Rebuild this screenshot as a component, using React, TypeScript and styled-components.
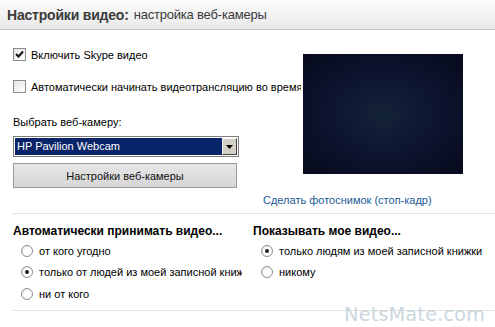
import React from 'react';
import styled, { createGlobalStyle } from 'styled-components';

const GlobalStyle = createGlobalStyle`
  html, body {
    margin: 0;
    padding: 0;
    background: #ffffff;
  }
  body {
    font-family: "Liberation Sans", Arial, sans-serif;
    font-size: 11px;
    color: #000000;
  }
`;

const Window = styled.div`
  position: relative;
  width: 495px;
  height: 327px;
  overflow: hidden;
  background: #ffffff;
`;

const Header = styled.div`
  height: 29px;
  display: flex;
  align-items: center;
  padding-left: 7px;
  background: linear-gradient(#fbfbfb, #e9e9e9);
  border-bottom: 1px solid #c9c9c9;
  font-size: 13px;
  letter-spacing: -0.2px;
  color: #3a3a3a;
  white-space: nowrap;
`;

const HeaderStrong = styled.span`
  font-size: 14px;
  font-weight: bold;
  margin-right: 5px;
`;

const Top = styled.div`
  display: flex;
  height: 183px;
  border-bottom: 1px solid #e2e2e2;
  margin-left: 12px;
  padding-left: 1px;
`;

const LeftCol = styled.div`
  width: 250px;
  display: flex;
  flex-direction: column;
  padding-top: 18px;
`;

const CheckRow = styled.label`
  width: 288px;
  height: 13px;
  display: flex;
  align-items: center;
  gap: 5px;
  overflow: hidden;
  white-space: nowrap;
  margin-bottom: 19px;
`;

const Box = styled.span`
  flex: 0 0 auto;
  width: 11px;
  height: 11px;
  border: 1px solid #8c8c8c;
  background: linear-gradient(135deg, #e4e4e4, #ffffff);
  display: flex;
  align-items: center;
  justify-content: center;
`;

const FieldLabel = styled.div`
  margin-top: 3px;
  height: 14px;
  line-height: 14px;
`;

const Select = styled.div`
  margin-top: 7px;
  width: 222px;
  height: 17px;
  border: 1px solid #7c7c7c;
  padding: 1px;
  display: flex;
  background: #ffffff;
`;

const SelectValue = styled.div`
  flex: 1;
  background: #0a246a;
  color: #ffffff;
  line-height: 17px;
  padding-left: 2px;
`;

const SelectArrow = styled.div`
  width: 15px;
  background: #d4d0c8;
  border-top: 1px solid #f4f4f4;
  border-left: 1px solid #f4f4f4;
  border-right: 1px solid #404040;
  border-bottom: 1px solid #404040;
  box-sizing: border-box;
  display: flex;
  align-items: center;
  justify-content: center;
`;

const Button = styled.div`
  margin-top: 6px;
  width: 222px;
  height: 23px;
  border: 1px solid #9a9a9a;
  background: linear-gradient(#e6e6e6, #d6d6d6);
  display: flex;
  align-items: center;
  justify-content: center;
  color: #111;
`;

const RightCol = styled.div`
  display: flex;
  flex-direction: column;
  padding-top: 24px;
`;

const Preview = styled.div`
  margin-left: 40px;
  width: 160px;
  height: 120px;
  background: radial-gradient(ellipse at 50% 50%, #142338 0%, #0d1530 45%, #070a1c 100%);
`;

const Link = styled.a`
  margin-top: 19px;
  color: #1b5a96;
  text-decoration: none;
  line-height: 14px;
`;

const Bottom = styled.div`
  display: grid;
  grid-template-columns: 229px 1fr;
  column-gap: 11px;
  margin-left: 12px;
  padding: 10px 0 0 1px;
  height: 86px;
  border-bottom: 1px solid #e2e2e2;
`;

const Group = styled.div`
  display: flex;
  flex-direction: column;
  overflow: hidden;
  white-space: nowrap;
`;

const GroupTitle = styled.div`
  font-weight: bold;
  font-size: 12px;
  height: 14px;
  line-height: 14px;
  margin-bottom: 6px;
`;

const RadioRow = styled.div<{ $gap: number }>`
  display: flex;
  align-items: center;
  gap: 6px;
  height: 13px;
  padding-left: 8px;
  margin-bottom: ${(p) => p.$gap}px;
`;

const Radio = styled.span<{ $on?: boolean }>`
  flex: 0 0 auto;
  width: 10px;
  height: 10px;
  border-radius: 50%;
  border: 1px solid #8e8e8e;
  background: radial-gradient(circle at 60% 60%, #ffffff 40%, #dcdcdc 100%);
  display: flex;
  align-items: center;
  justify-content: center;
  &::after {
    content: '';
    display: ${(p) => (p.$on ? 'block' : 'none')};
    width: 4px;
    height: 4px;
    border-radius: 50%;
    background: #222;
  }
`;

const Watermark = styled.div`
  position: absolute;
  right: 10px;
  bottom: 2px;
  font-family: "DejaVu Sans", sans-serif;
  font-size: 19px;
  color: #cbd7de;
  letter-spacing: 0.3px;
`;

const Check = () => (
  <svg width="9" height="9" viewBox="0 0 9 9">
    <path d="M1 4 L3.5 6.5 L8 1.5" stroke="#111" strokeWidth="2" fill="none" />
  </svg>
);

const App = () => (
  <Window>
    <GlobalStyle />
    <Header>
      <HeaderStrong>Настройки видео:</HeaderStrong>
      настройка веб-камеры
    </Header>
    <Top>
      <LeftCol>
        <CheckRow>
          <Box>
            <Check />
          </Box>
          Включить Skype видео
        </CheckRow>
        <CheckRow>
          <Box />
          Автоматически начинать видеотрансляцию во время звонка
        </CheckRow>
        <FieldLabel>Выбрать веб-камеру:</FieldLabel>
        <Select>
          <SelectValue>HP Pavilion Webcam</SelectValue>
          <SelectArrow>
            <svg width="7" height="4" viewBox="0 0 7 4">
              <path d="M0 0 H7 L3.5 4 Z" fill="#000" />
            </svg>
          </SelectArrow>
        </Select>
        <Button>Настройки веб-камеры</Button>
      </LeftCol>
      <RightCol>
        <Preview />
        <Link href="#">Сделать фотоснимок (стоп-кадр)</Link>
      </RightCol>
    </Top>
    <Bottom>
      <Group>
        <GroupTitle>Автоматически принимать видео...</GroupTitle>
        <RadioRow $gap={8}>
          <Radio />
          от кого угодно
        </RadioRow>
        <RadioRow $gap={9}>
          <Radio $on />
          только от людей из моей записной книжки
        </RadioRow>
        <RadioRow $gap={0}>
          <Radio />
          ни от кого
        </RadioRow>
      </Group>
      <Group>
        <GroupTitle>Показывать мое видео...</GroupTitle>
        <RadioRow $gap={8}>
          <Radio $on />
          только людям из моей записной книжки
        </RadioRow>
        <RadioRow $gap={0}>
          <Radio />
          никому
        </RadioRow>
      </Group>
    </Bottom>
    <Watermark>NetsMate.com</Watermark>
  </Window>
);

export default App;
